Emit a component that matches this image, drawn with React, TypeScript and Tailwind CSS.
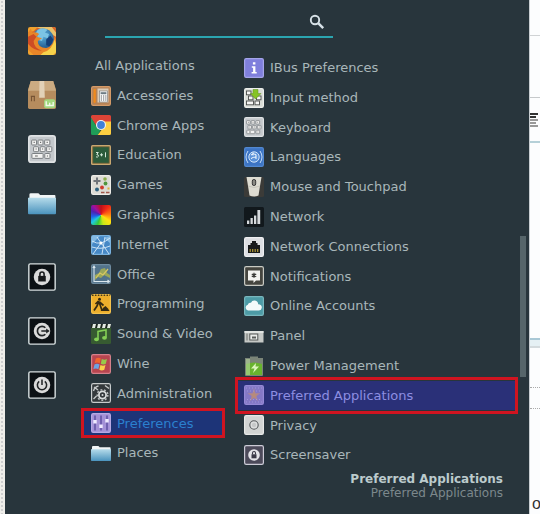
import type { ReactNode } from "react";
import clsx from "clsx";

type Item = { name: string; icon?: ReactNode };

const Svg = ({ children, className = "size-5" }: { children: ReactNode; className?: string }) => (
  <svg viewBox="0 0 20 20" className={clsx("shrink-0", className)} aria-hidden="true">
    {children}
  </svg>
);

const Tile = ({ fill, stroke }: { fill: string; stroke: string }) => (
  <rect x="0.6" y="0.6" width="18.8" height="18.8" rx="1.6" fill={fill} stroke={stroke} strokeWidth="1.2" />
);

const FolderIcon = ({ id, className }: { id: string; className?: string }) => (
  <Svg className={className}>
    <defs>
      <linearGradient id={id} x1="0" y1="0" x2="0" y2="1">
        <stop offset="0" stopColor="#b5dbea" />
        <stop offset="1" stopColor="#4a93bd" />
      </linearGradient>
    </defs>
    <path d="M1 6V4q0-1 1-1h5q1 0 1.200.8L8.600 4.300H19q.6 0 .6.700V8H.4Z" fill="#f1f5f6" />
    <path d="M0 6.300h20v11q0 .7-.7.700H.7q-.7 0-.7-.7Z" fill={`url(#${id})`} />
  </Svg>
);

const FirefoxIcon = () => (
  <Svg className="size-7">
    <defs>
      <radialGradient id="globe" cx="0.5" cy="0.3" r="0.7">
        <stop offset="0" stopColor="#5fb5df" />
        <stop offset="1" stopColor="#174a82" />
      </radialGradient>
    </defs>
    <rect width="20" height="20" rx="1.5" fill="#f0a22e" />
    <path d="M0 12V4l4-1 3-3h12l1 1v9Z" fill="#d9652a" />
    <path d="M6 0h11l3 4v3L13 3Z" fill="#e9c36d" />
    <circle cx="10.500" cy="9" r="8" fill="url(#globe)" />
    <path d="M7 2q4-2 7 0l-2 2 3 1-1 3-3-1-1 3-4-1 1-3-2-1Z" fill="#7cc4e4" />
    <path d="M13 9l3-3 2 3-2 5-3-1Z" fill="#163f78" />
    <path d="M0 4l2-3 1 3q3-1 5 1L6 7l4 1-3 2q0 5 6 5 5-1 6-8l1 2v9l-2 2H4L0 16Z" fill="#e98628" />
    <path d="M0 7l4-2 2 2-2 3q0 5 6 7-6 0-10-5Z" fill="#ce4c25" />
    <path d="M11 18q6-1 8-9l1 3v6l-2 2H9Z" fill="#f6d24b" />
  </Svg>
);

const PackageIcon = () => (
  <Svg className="size-7">
    <path d="M2 0h16l2 6v13q0 1-1 1H1q-1 0-1-1V6Z" fill="#b68c5e" />
    <path d="M2 0h16l2 7H0Z" fill="#cbab82" />
    <path d="M8.200 0h3.400l.4 12H8Z" fill="#e2d1b7" />
    <path d="M2.500 11.500v3M4.500 11.500v3M2 11h3" stroke="#765334" strokeWidth="0.800" />
    <rect x="11.500" y="13" width="8" height="6.500" rx="1.500" fill="#a3d87f" />
    <path d="M13 14.500v3h5v-2.500M15.500 15.500v2" fill="none" stroke="#f1faea" strokeWidth="1" />
  </Svg>
);

const KeyboardIcon = ({ className }: { className?: string }) => (
  <Svg className={className}>
    <Tile fill="#c4c8cc" stroke="#dfe2e4" />
    <g fill="#f2f2f1" stroke="#777b7e" strokeWidth="0.700">
      <rect x="2.600" y="3.600" width="3.500" height="3.500" rx=".5" />
      <rect x="7.200" y="3.600" width="3.500" height="3.500" rx=".5" />
      <rect x="11.900" y="3.600" width="3.700" height="3.500" rx=".5" />
      <rect x="4" y="8.400" width="3.500" height="3.500" rx=".5" />
      <rect x="8.700" y="8.400" width="3.500" height="3.500" rx=".5" />
      <rect x="13.300" y="8.400" width="3.700" height="3.500" rx=".5" />
      <rect x="2.800" y="13.200" width="8" height="3.500" rx=".5" />
      <rect x="12" y="13.200" width="3.700" height="3.500" rx=".5" />
    </g>
    <path d="M4 5.300h.8M8.600 5.300h.8M13.300 5.300h.8M5.400 10h.8M10 10h.8M14.800 10h.8M5 15h2M13.500 15h.8" stroke="#666" strokeWidth=".8" />
  </Svg>
);

const SessionIcon = ({ children }: { children: ReactNode }) => (
  <Svg className="size-7">
    <rect x="0.600" y="0.600" width="18.800" height="18.800" rx="1" fill="#0c1115" stroke="#d8e0e1" strokeWidth="1" />
    <circle cx="10" cy="10" r="5.900" fill="#dadada" />
    {children}
  </Svg>
);

const favorites: Item[] = [
  { name: "Firefox", icon: <FirefoxIcon /> },
  { name: "Software Manager", icon: <PackageIcon /> },
  { name: "Keyboard", icon: <KeyboardIcon className="size-7" /> },
  { name: "Files", icon: <FolderIcon id="files" className="size-7" /> },
];

const session: Item[] = [
  {
    name: "Lock screen",
    icon: (
      <SessionIcon>
        <rect x="7.300" y="9.200" width="5.400" height="4" fill="#17191b" />
        <path d="M8.500 9.500V8a1.500 1.500 0 0 1 3 0v1.500" fill="none" stroke="#17191b" strokeWidth="1.100" />
      </SessionIcon>
    ),
  },
  {
    name: "Log out",
    icon: (
      <SessionIcon>
        <path d="M12.400 7.700a3.300 3.300 0 1 0 0 4.600M9.500 10h4.500" fill="none" stroke="#222527" strokeWidth="1.200" />
        <path d="M13 8.200 15.500 10 13 11.800Z" fill="#222527" />
      </SessionIcon>
    ),
  },
  {
    name: "Quit",
    icon: (
      <SessionIcon>
        <path d="M8 7.400a3.300 3.300 0 1 0 4 0M10 6v4" fill="none" stroke="#222527" strokeWidth="1.100" />
      </SessionIcon>
    ),
  },
];

const categories: Item[] = [
  { name: "All Applications" },
  {
    name: "Accessories",
    icon: (
      <Svg>
        <Tile fill="#b68256" stroke="#d49a68" />
        <path d="M2.500 3h2.300v13l-1.100 1.500L2.500 16Z" fill="#f08a1c" />
        <path d="M6.500 2.500h11v14h-11Z" fill="#d9cbb8" />
        <rect x="8.500" y="5" width="8" height="11" fill="#fafafa" stroke="#777" strokeWidth=".6" />
        <rect x="9.600" y="6.200" width="5.800" height="2" fill="#6c7a83" />
        <path d="M9.800 10h5.600M9.800 12h5.600M9.800 14h5.600" stroke="#5c5f63" strokeWidth="1.100" strokeDasharray="1.200 1" />
      </Svg>
    ),
  },
  {
    name: "Chrome Apps",
    icon: (
      <Svg>
        <path d="M1.500 0h17Q20 0 20 1.500V7H10L6 12 0 3V1.500Q0 0 1.500 0Z" fill="#dd4437" />
        <path d="M0 2.500 6.500 13l3.500 1-3 6H1.500Q0 20 0 18.500Z" fill="#1f9d58" />
        <path d="M20 6.500V18.500q0 1.500-1.500 1.500H6.700L13.500 11 12 6.500Z" fill="#fdce41" />
        <circle cx="10" cy="10" r="5" fill="#f4f5f4" />
        <circle cx="10" cy="10" r="3.900" fill="#4180d6" />
      </Svg>
    ),
  },
  {
    name: "Education",
    icon: (
      <Svg>
        <rect width="20" height="20" rx="1.500" fill="#c9a870" />
        <rect x="1.800" y="1.800" width="16.400" height="16.400" fill="#2b5b3b" stroke="#7a5f36" strokeWidth=".8" />
        <path d="M5 7.500h2.300L5.800 9.500q2 0 1.600 1.800-.6 1.200-2.400.6M9 9.800h3M10.500 8.300v3M14.500 7.300v5" fill="none" stroke="#d5e8da" strokeWidth="1" />
      </Svg>
    ),
  },
  {
    name: "Games",
    icon: (
      <Svg>
        <Tile fill="#dcdbd4" stroke="#edece8" />
        <path d="M5 2.500h2V5h2.500v2H7v2.500H5V7H2.500V5H5Z" fill="#70757a" />
        <circle cx="14" cy="4" r="1.800" fill="#8eae4e" />
        <circle cx="14.500" cy="8.500" r="1.900" fill="#4f963e" />
        <circle cx="11" cy="12.500" r="1.900" fill="#cf3a2c" />
        <circle cx="6" cy="14.500" r="2" fill="#2f6280" />
        <path d="M10 17.500h3.500M15 17.500h3.500" stroke="#a2584c" strokeWidth="1.500" />
        <path d="M16.500 13.500h2" stroke="#dfae38" strokeWidth="2" />
      </Svg>
    ),
  },
  {
    name: "Graphics",
    icon: (
      <span className="size-5 shrink-0 rounded-xs bg-[conic-gradient(#c01018,#f02818_40deg,#ff7a10_85deg,#ffe010_125deg,#c8e818_165deg,#38c838_200deg,#20c8e0_230deg,#2060e8_260deg,#5020b0_295deg,#a010a0_320deg,#c01018)]" />
    ),
  },
  {
    name: "Internet",
    icon: (
      <Svg>
        <Tile fill="#4688c6" stroke="#79b2df" />
        <path d="M1 1h8L1 9ZM13 3l6-2v7Z" fill="#84b9e3" />
        <path d="M1 6q5 3 9 2t9-5M2 19l8-11q3 3 8 11M6 2l4 6M1 12q9 3 18-1M14 2l-3 17" fill="none" stroke="#d8ecfa" strokeWidth=".9" />
        <circle cx="10" cy="8" r="1.600" fill="#fff" />
      </Svg>
    ),
  },
  {
    name: "Office",
    icon: (
      <Svg>
        <Tile fill="#52738b" stroke="#6f8ca0" />
        <path d="M4 16V11l4-2 2-4 4-1 2 5 3 2v3l-6-3-3 3-3-1Z" fill="#9aa75a" />
        <path d="M5 14l4-5 3 2 5-6" fill="none" stroke="#d9c864" strokeWidth="1.200" />
        <path d="M3 2v15.500h15M1.800 4 3 2l1.200 2M16.500 16l1.800 1.500-1.800 1.200" fill="none" stroke="#dbe7ed" strokeWidth="1.100" />
      </Svg>
    ),
  },
  {
    name: "Programming",
    icon: (
      <Svg>
        <Tile fill="#edae2b" stroke="#f4c24c" />
        <path d="M1 1.200h18" stroke="#4b3a15" strokeWidth="1.600" strokeDasharray="1.600 1.300" />
        <circle cx="8.500" cy="5.200" r="1.500" fill="#352a12" />
        <path d="M7.500 7 4.500 10M7.500 7l2 5 1.500 4.500M7.500 8.500 6 12l-3 4.500M8.500 8l4 3.500" fill="none" stroke="#352a12" strokeWidth="1.700" />
        <path d="M9.500 17l3-3.500 2-1.500 2.500 2.500 1.500 2.500Z" fill="#352a12" />
      </Svg>
    ),
  },
  {
    name: "Sound & Video",
    icon: (
      <Svg>
        <rect width="20" height="20" rx="1.500" fill="#375b31" />
        <path d="M0 0h20v4H0Z" fill="#1d2620" />
        <path d="M2 0h3L4 4H1ZM7 0h3L9 4H6ZM12 0h3l-1 4h-3ZM17 0h3l-1 4h-3Z" fill="#e3eae2" />
        <path d="M7 15V7.500l8-1.500v7.500" fill="none" stroke="#83cf55" strokeWidth="1.600" />
        <ellipse cx="5.500" cy="15.300" rx="2.400" ry="1.900" fill="#83cf55" />
        <ellipse cx="13.500" cy="13.800" rx="2.400" ry="1.900" fill="#83cf55" />
      </Svg>
    ),
  },
  {
    name: "Wine",
    icon: (
      <Svg>
        <Tile fill="#b8454f" stroke="#d5808a" />
        <path d="M4.800 4.500q2.500-1.600 5 0L8.700 9.300q-2.500-1.500-5 0Z" fill="#f0662e" />
        <path d="M10.800 5q2.600 1.500 5.200 0l-1.200 4.800q-2.500 1.500-5 0Z" fill="#98c94a" />
        <path d="M3.500 10.500q2.500-1.500 5 0l-1.200 4.800q-2.500-1.500-5 0Z" fill="#6ea4e2" />
        <path d="M9.500 11q2.500 1.500 5 0l-1.200 4.800q-2.500 1.500-5 0Z" fill="#f8d24a" />
      </Svg>
    ),
  },
  {
    name: "Administration",
    icon: (
      <Svg>
        <Tile fill="#33383b" stroke="#c7cbcc" />
        <circle cx="11.500" cy="12" r="3.600" fill="none" stroke="#dadddd" strokeWidth="1.800" />
        <circle cx="11.500" cy="12" r="5.300" fill="none" stroke="#b9bdbe" strokeWidth="1.600" strokeDasharray="1.900 1.800" />
        <path d="M2.500 8q1-4 5-5M3 4l4 3M14 2.500l4 3M2.500 16l3-3" stroke="#c4c8c9" strokeWidth="1.400" fill="none" />
        <circle cx="11.500" cy="12" r="1" fill="#dadddd" />
      </Svg>
    ),
  },
  {
    name: "Preferences",
    icon: (
      <Svg>
        <Tile fill="#a391d6" stroke="#b8a9e4" />
        <path d="M4 2.500v15M10 2.500v15M16 2.500v15" stroke="#54479a" strokeWidth="1.300" />
        <path d="M2.300 7h3.400v3.500H2.300ZM8.300 11.500h3.400V15H8.300ZM14.300 6h3.400v3.500h-3.400Z" fill="#eeeaff" />
      </Svg>
    ),
  },
  { name: "Places", icon: <FolderIcon id="places" /> },
];

const applications: Item[] = [
  {
    name: "IBus Preferences",
    icon: (
      <Svg>
        <Tile fill="#7f7fdc" stroke="#a5a5ea" />
        <path d="M8.900 4.300h2.500v2.300H8.900ZM7.800 8.300h3.600v5.600h1.300v1.500H7.600v-1.500h1.500V9.800H7.800Z" fill="#fff" />
      </Svg>
    ),
  },
  {
    name: "Input method",
    icon: (
      <Svg>
        <Tile fill="#d8dbd6" stroke="#eceeeb" />
        <g fill="#f6f6f4" stroke="#4a4d4b" strokeWidth=".9">
          <rect x="2.500" y="3" width="4.500" height="3.800" />
          <rect x="4.500" y="8" width="4.500" height="3.800" />
          <rect x="12.500" y="8" width="4.500" height="3.800" />
          <rect x="2.500" y="13" width="7" height="3.800" />
          <rect x="11" y="13" width="4.500" height="3.800" />
        </g>
        <path d="M9 1.500h5v4h3L11.500 11 6.500 5.500H9Z" fill="#86c326" stroke="#5f911c" strokeWidth=".5" />
      </Svg>
    ),
  },
  { name: "Keyboard", icon: <KeyboardIcon /> },
  {
    name: "Languages",
    icon: (
      <Svg>
        <Tile fill="#3c74c4" stroke="#5288d0" />
        <circle cx="10" cy="10" r="5.200" fill="#5b93da" stroke="#d3e5f8" strokeWidth="1" />
        <path d="M4 4q-4 6 0 12M16 4q4 6 0 12" fill="none" stroke="#c5dcf5" strokeWidth="1" />
        <path d="M7 8q3-2 5 0v4M7.500 12q0-2 4.500-2M9 5.500v3" fill="none" stroke="#e8f2fc" strokeWidth="1.100" />
      </Svg>
    ),
  },
  {
    name: "Mouse and Touchpad",
    icon: (
      <Svg>
        <rect width="20" height="20" rx="1.500" fill="#3b3b38" />
        <path d="M2.500 0h15L16 9l-1.500 9.500Q10 20.500 5.500 18.500L4 9Z" fill="#dddcd2" />
        <path d="M4 9q6 3 12 0" fill="none" stroke="#bdbcb2" strokeWidth=".7" />
        <rect x="8.300" y="2.500" width="3.400" height="6" rx="1.600" fill="#8a8a84" stroke="#383838" />
      </Svg>
    ),
  },
  {
    name: "Network",
    icon: (
      <Svg>
        <rect width="20" height="20" rx="1.500" fill="#11181c" />
        <path d="M3 13.500h2.300V17H3ZM6.500 11h2.300v6H6.500ZM10 8.500h2.300V17H10ZM13.400 3h2.800v14h-2.800Z" fill="#d6dadd" />
      </Svg>
    ),
  },
  {
    name: "Network Connections",
    icon: (
      <Svg>
        <Tile fill="#dcdee2" stroke="#eff0f2" />
        <path d="M4 16V8h2.500V6H8V4h4v2h1.500v2H16v8Z" fill="#17191b" />
        <path d="M6.200 12v3M8.700 12v3M11.200 12v3M13.700 12v3" stroke="#b19a3a" strokeWidth="1.200" />
      </Svg>
    ),
  },
  {
    name: "Notifications",
    icon: (
      <Svg>
        <Tile fill="#45453f" stroke="#c9cac3" />
        <path d="M4 4.500h12v10h-4L9.500 17v-2.500H4Z" fill="#f3f3f0" />
        <path d="M10 6.800v5M7.800 8l4.400 2.600M12.200 8l-4.400 2.600" stroke="#3b3b38" strokeWidth="1.300" />
      </Svg>
    ),
  },
  {
    name: "Online Accounts",
    icon: (
      <Svg>
        <Tile fill="#4d9ba6" stroke="#78b6bd" />
        <path d="M4 14.500a3 3 0 0 1-.2-5.800Q4.500 6.300 7 6.800 8 4 11 4.500q3 .6 3.200 3.800 3.800.2 3.600 3.500-.3 2.500-2.800 2.700Z" fill="#f5fafa" />
      </Svg>
    ),
  },
  {
    name: "Panel",
    icon: (
      <Svg>
        <rect x=".5" y="5" width="19" height="11.500" fill="#c6c9c6" />
        <path d="M.5 5h19v2H.5Z" fill="#e1e4e1" />
        <path d="M3 7.500v7" stroke="#6d706d" />
        <rect x="5.800" y="8" width="8" height="6" fill="#e9ebe8" stroke="#555957" />
        <path d="M8 10.500h4v2H8Z" fill="#595d5b" />
      </Svg>
    ),
  },
  {
    name: "Power Management",
    icon: (
      <Svg>
        <path d="M1 2h5V.5h8V2h5v17q0 1-1 1H2q-1 0-1-1Z" fill="#7b8578" />
        <path d="M2 8q8-3 16 0v11H2Z" fill="#68b32e" />
        <path d="M2 3h4v16H2Z" fill="#b5d59d" opacity=".6" />
        <path d="m12 7-5 5.500h3.500L9 17l6-6.500h-3.500Z" fill="#dcf5bd" />
      </Svg>
    ),
  },
  {
    name: "Preferred Applications",
    icon: (
      <Svg>
        <Tile fill="#8478c6" stroke="#9589d6" />
        <path d="m10 3 1.500 5 5 .3-4 2.700 1.500 5-4-3-4 3 1.500-5-4-2.700 5-.3Z" fill="#a98597" />
        <path d="m10 6 1 3 3 .5-2.500 1.500.5 3-2-1.800L8 14l.5-3L6 9.500 9 9Z" fill="#b88b79" />
        <path d="M2 3h16M2 17h16M3 6h14M3 14.500h14" stroke="#aaa0df" strokeWidth=".7" strokeDasharray="1 2" />
      </Svg>
    ),
  },
  {
    name: "Privacy",
    icon: (
      <Svg>
        <Tile fill="#d2d4d3" stroke="#e7e8e7" />
        <circle cx="10" cy="10" r="4.200" fill="#dedfdf" stroke="#565a5c" strokeWidth="1.100" />
        <circle cx="10" cy="10" r="2.200" fill="#c6c8c8" />
      </Svg>
    ),
  },
  {
    name: "Screensaver",
    icon: (
      <Svg>
        <Tile fill="#4c4a5a" stroke="#cccbd6" />
        <circle cx="10" cy="10" r="5.800" fill="#e4e4e9" />
        <rect x="7.500" y="9.300" width="5" height="4" fill="#3b3a48" />
        <path d="M8.500 9.500V8a1.500 1.500 0 0 1 3 0v1.500" fill="none" stroke="#3b3a48" strokeWidth="1.100" />
      </Svg>
    ),
  },
];

const Rail = ({ items, label }: { items: Item[]; label: string }) => (
  <nav aria-label={label} className="flex flex-col gap-[26px]">
    {items.map((item) => (
      <button key={item.name} type="button" aria-label={item.name}>
        {item.icon}
      </button>
    ))}
  </nav>
);

const CategoryList = () => (
  <ul className="flex w-36 shrink-0 flex-col pb-0.5">
    {categories.map((item) => {
      const active = item.name === "Preferences";
      return (
        <li key={item.name} className="flex min-h-0 flex-1">
          <button
            type="button"
            className={clsx(
              "flex w-full items-center gap-1.5 whitespace-nowrap",
              active ? "border-3 border-[#d01420] bg-[#1d3478] pl-[7px] text-[#2b80cf]" : "pl-2.5",
              !item.icon && "pl-3.5"
            )}
          >
            {item.icon}
            {item.name}
          </button>
        </li>
      );
    })}
  </ul>
);

const ApplicationList = () => (
  <ul className="flex min-w-0 flex-1 flex-col pt-0.5">
    {applications.map((item) => {
      const active = item.name === "Preferred Applications";
      return (
        <li key={item.name} className="relative flex min-h-0 flex-1">
          <button
            type="button"
            className={clsx(
              "flex w-full items-center gap-1.5 pl-[9px] whitespace-nowrap",
              active && "bg-[#2a3078] text-[#8d8ee2]"
            )}
          >
            {item.icon}
            {item.name}
          </button>
          {active && <span className="pointer-events-none absolute inset-x-0 -inset-y-1 border-3 border-[#d01420]" />}
        </li>
      );
    })}
  </ul>
);

/* Sliver of the document window showing to the right of the menu */
const PageEdge = () => (
  <div className="flex w-[11px] shrink-0 flex-col border-l border-[#c9ced2] bg-[#fcfdfe] font-['Liberation_Sans',sans-serif] text-base text-[#333]">
    <div className="h-9 border-b border-[#d0d3d5]" />
    <div className="h-[62px] border-b border-[#c6c9cb]" />
    <div className="flex h-[43px] flex-col gap-px pt-[15px]">
      <div className="h-0.5 w-2 bg-[#333]" />
      <div className="h-0.5 w-1.5 bg-[#333]" />
      <div className="h-0.5 w-2 bg-[#999]" />
      <div className="h-0.5 w-1.5 bg-[#999]" />
      <div className="h-0.5 w-2 bg-[#999]" />
    </div>
    <div className="h-[197px] border-t-2 border-[#b5d0d8]" />
    <div className="h-2.5 border-y-2 border-t-[#a9c8d6] border-b-[#d3dadd] bg-[#e5f0f4]" />
    <div className="h-10 border-b border-dotted border-[#aaa]" />
    <div className="h-[21px] border-b border-dotted border-[#aaa]" />
    <div className="flex flex-1 items-end pb-0.5 pl-0.5 leading-4">o</div>
  </div>
);

const App = () => {
  return (
    <div className="flex h-screen overflow-hidden bg-[radial-gradient(#cfcfd0_1px,#efeeea_1px)] bg-size-[4px_4px] font-['DejaVu_Sans',sans-serif] text-[13px] text-[#a9b7ba]">
      <div className="ml-[5px] flex min-w-0 flex-1 bg-[#28353c]">
        <aside className="flex w-[76px] shrink-0 flex-col gap-[46px] pt-[27px] pl-[23px]">
          <Rail items={favorites} label="Favorites" />
          <Rail items={session} label="Session" />
        </aside>

        <div className="flex min-w-0 flex-1 flex-col">
          <form role="search" className="ml-6 flex h-[38px] w-57 items-center border-b-2 border-[#2ba5b0] pt-2 pr-2">
            <input aria-label="Search" type="text" className="min-w-0 flex-1 bg-transparent outline-none" />
            <svg viewBox="0 0 16 16" className="size-4" fill="none" stroke="#d8e2e8" aria-hidden="true">
              <circle cx="6" cy="6" r="4.200" strokeWidth="1.900" />
              <path d="m9.200 9.200 5 5" strokeWidth="2.500" />
            </svg>
          </form>

          <div className="mt-[13px] flex min-h-0 flex-1">
            <CategoryList />
            <div className="ml-2.5 flex min-w-0 flex-1">
              <ApplicationList />
              <div className="ml-0.5 flex w-[9px] flex-col pt-[185px] pb-[93px]">
                <div className="w-1.5 flex-1 bg-[#56656a]" />
              </div>
            </div>
          </div>

          <footer className="pt-0.5 pr-[26px] pb-3.5 text-right text-xs leading-[14px]">
            <p className="font-bold text-[#bccbcd]">Preferred Applications</p>
            <p className="text-[#7c888c]">Preferred Applications</p>
          </footer>
        </div>
      </div>
      <PageEdge />
    </div>
  );
};

export default App;
